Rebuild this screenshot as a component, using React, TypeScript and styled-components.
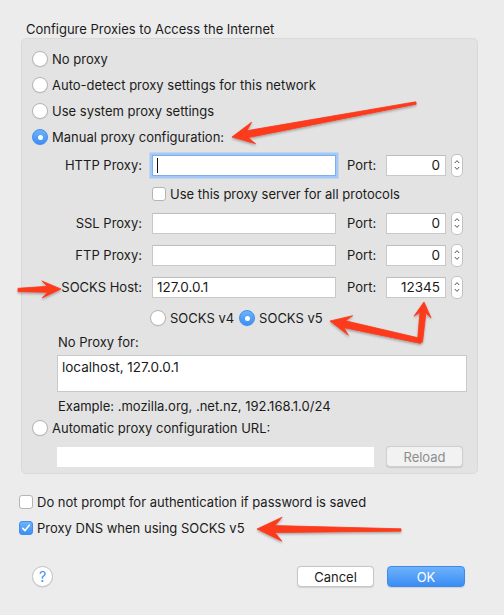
import React from 'react';
import styled, { createGlobalStyle, css } from 'styled-components';

const GlobalStyle = createGlobalStyle`
    * {
        box-sizing: border-box;
    }
    html, body {
        margin: 0;
        padding: 0;
        background: #ececec;
    }
    body {
        font-family: Inter, Roboto, "Liberation Sans", Arial, sans-serif;
        font-size: 13px;
        color: #1b1b1b;
    }
`;

type Pt = [number, number];

// skitch-like arrow: tapered shaft, swept-back barbs
const arrowPoints = (tail: Pt, tip: Pt, tailW: number, shaftW: number, headLen: number, headW: number) => {
    const dx = tip[0] - tail[0];
    const dy = tip[1] - tail[1];
    const len = Math.hypot(dx, dy);
    const ux = dx / len;
    const uy = dy / len;
    const nx = -uy;
    const ny = ux;
    const at = (d: number, w: number): Pt => [tip[0] - ux * d + nx * w, tip[1] - uy * d + ny * w];
    const pts: Pt[] = [
        [tail[0] + nx * tailW / 2, tail[1] + ny * tailW / 2],
        at(headLen * 0.72, shaftW / 2),
        at(headLen, headW / 2),
        tip,
        at(headLen, -headW / 2),
        at(headLen * 0.72, -shaftW / 2),
        [tail[0] - nx * tailW / 2, tail[1] - ny * tailW / 2],
    ];
    return pts.map((p) => `${p[0].toFixed(1)},${p[1].toFixed(1)}`).join(' ');
};

const arrows = [
    arrowPoints([416, 103], [232, 137], 2.5, 7, 22, 22),
    arrowPoints([18, 290], [61, 289], 3.5, 6, 19, 17),
    arrowPoints([421, 341], [330, 321], 5, 7, 21, 20),
    arrowPoints([420, 342], [424, 302], 5, 6, 15, 17),
    arrowPoints([401, 530], [257, 529], 2.5, 7, 25, 24),
];

const Annotations = () => (
    <Overlay viewBox="0 0 504 615" width={504} height={615}>
        <defs>
            <filter id="shadow" x="-10%" y="-20%" width="120%" height="140%">
                <feDropShadow dx="0" dy="1.5" stdDeviation="1.2" floodColor="#000" floodOpacity="0.3" />
            </filter>
        </defs>
        <g filter="url(#shadow)" fill="#fb3a1c">
            {arrows.map((p, i) => (
                <polygon key={i} points={p} strokeLinejoin="round" stroke="#fb3a1c" strokeWidth={0.8} />
            ))}
        </g>
    </Overlay>
);

const Radio = ({ checked, label }: { checked?: boolean; label: string }) => (
    <RadioRow>
        <RadioDot checked={checked} />
        <span>{label}</span>
    </RadioRow>
);

const Check = ({ checked, label }: { checked?: boolean; label: string }) => (
    <CheckRow>
        <CheckBox checked={checked}>
            {checked && (
                <svg width="10" height="10" viewBox="0 0 10 10">
                    <path d="M1.8 5.4 L4 7.6 L8.3 2.2" fill="none" stroke="#fff" strokeWidth="1.6" strokeLinecap="round" strokeLinejoin="round" />
                </svg>
            )}
        </CheckBox>
        <span>{label}</span>
    </CheckRow>
);

const Stepper = () => (
    <StepperBox>
        <svg width="8" height="18" viewBox="0 0 8 18">
            <path d="M1.8 7 L4 4.6 L6.2 7" fill="none" stroke="#555" strokeWidth="1" />
            <path d="M1.8 11 L4 13.4 L6.2 11" fill="none" stroke="#555" strokeWidth="1" />
        </svg>
    </StepperBox>
);

const ProxyRow = ({ label, host, port, focused }: { label: string; host?: string; port: string; focused?: boolean }) => (
    <>
        <FieldLabel>{label}</FieldLabel>
        <Field focused={focused}>
            {focused && <Caret />}
            {host}
        </Field>
        <PortLabel>Port:</PortLabel>
        <Field align="right">{port}</Field>
        <Stepper />
    </>
);

export default function App() {
    return (
        <Window>
            <GlobalStyle />
            <Title>Configure Proxies to Access the Internet</Title>
            <Group>
                <RadioList>
                    <Radio label="No proxy" />
                    <Radio label="Auto-detect proxy settings for this network" />
                    <Radio label="Use system proxy settings" />
                    <Radio checked label="Manual proxy configuration:" />
                </RadioList>

                <ManualGrid>
                    <ProxyRow label="HTTP Proxy:" port="0" focused />
                    <GridCheck>
                        <Check label="Use this proxy server for all protocols" />
                    </GridCheck>
                    <ProxyRow label="SSL Proxy:" port="0" />
                    <ProxyRow label="FTP Proxy:" port="0" />
                    <ProxyRow label="SOCKS Host:" host="127.0.0.1" port="12345" />
                </ManualGrid>

                <SocksVersions>
                    <Radio label="SOCKS v4" />
                    <Radio checked label="SOCKS v5" />
                </SocksVersions>

                <NoProxy>
                    <span>No Proxy for:</span>
                    <TextArea>localhost, 127.0.0.1</TextArea>
                    <span>Example: .mozilla.org, .net.nz, 192.168.1.0/24</span>
                </NoProxy>

                <AutoSection>
                    <Radio label="Automatic proxy configuration URL:" />
                    <UrlRow>
                        <UrlField />
                        <Button disabled>Reload</Button>
                    </UrlRow>
                </AutoSection>
            </Group>

            <Options>
                <Check label="Do not prompt for authentication if password is saved" />
                <Check checked label="Proxy DNS when using SOCKS v5" />
            </Options>

            <Footer>
                <HelpButton>?</HelpButton>
                <Buttons>
                    <Button>Cancel</Button>
                    <Button primary>OK</Button>
                </Buttons>
            </Footer>

            <Annotations />
        </Window>
    );
}

const Window = styled.div`
    position: relative;
    width: 504px;
    height: 615px;
    overflow: hidden;
    padding-top: 21px;
    display: flex;
    flex-direction: column;
    background: #ececec;
`;

const Overlay = styled.svg`
    position: absolute;
    left: 0;
    top: 0;
    pointer-events: none;
`;

const Title = styled.div`
    margin-left: 26px;
    line-height: 16px;
    height: 16px;
`;

const Group = styled.div`
    margin: 1px 0 0 21px;
    width: 457px;
    height: 436px;
    background: #e3e3e3;
    border: 1px solid #d9d9d9;
    border-radius: 5px;
    display: flex;
    flex-direction: column;
`;

const RadioList = styled.div`
    display: flex;
    flex-direction: column;
    gap: 6px;
    padding: 10px 0 0 10px;
`;

const RadioRow = styled.label`
    display: flex;
    align-items: center;
    gap: 4px;
    height: 20px;
    white-space: nowrap;
`;

const RadioDot = styled.span<{ checked?: boolean }>`
    width: 16px;
    height: 16px;
    border-radius: 50%;
    flex: none;
    position: relative;
    background: #ffffff;
    border: 1px solid #b5b5b5;
    box-shadow: 0 0.5px 1px rgba(0, 0, 0, 0.08);
    ${(p) =>
        p.checked &&
        css`
            background: linear-gradient(#6cb3fa, #3d8ff5);
            border-color: #3f8ef0;
            &::after {
                content: '';
                position: absolute;
                left: 50%;
                top: 50%;
                width: 5px;
                height: 5px;
                margin: -2.5px 0 0 -2.5px;
                border-radius: 50%;
                background: #ffffff;
            }
        `}
`;

const ManualGrid = styled.div`
    display: grid;
    grid-template-columns: 130px 184px 50px 60px 17px;
    grid-template-rows: 22px 16px 22px 22px 22px;
    row-gap: 10px;
    align-items: center;
    margin-top: 7px;
`;

const FieldLabel = styled.div`
    text-align: right;
    padding-right: 10px;
    white-space: nowrap;
`;

const PortLabel = styled.div`
    padding-left: 11px;
`;

const Field = styled.div<{ focused?: boolean; align?: 'left' | 'right' }>`
    position: relative;
    height: 21px;
    background: #ffffff;
    border: 1px solid #c9c9c9;
    border-top-color: #bdbdbd;
    padding: 0 5px 0 4px;
    display: flex;
    align-items: center;
    justify-content: ${(p) => (p.align === 'right' ? 'flex-end' : 'flex-start')};
    font-size: 13.5px;
    white-space: nowrap;
    ${(p) =>
        p.focused &&
        css`
            border-color: #7eaef0;
            box-shadow: 0 0 0 2.5px #a5c9f5;
        `}
`;

const Caret = styled.span`
    width: 1px;
    height: 15px;
    background: #111111;
`;

const StepperBox = styled.div`
    margin-left: 5px;
    width: 12px;
    height: 23px;
    background: #ffffff;
    border: 1px solid #c2c2c2;
    border-radius: 5px;
    display: flex;
    align-items: center;
    justify-content: center;
`;

const GridCheck = styled.div`
    grid-column: 2 / 6;
`;

const CheckRow = styled.label`
    display: flex;
    align-items: center;
    gap: 4px;
    height: 16px;
    white-space: nowrap;
`;

const CheckBox = styled.span<{ checked?: boolean }>`
    width: 14px;
    height: 14px;
    flex: none;
    border-radius: 3px;
    display: flex;
    align-items: center;
    justify-content: center;
    background: #ffffff;
    border: 1px solid #b5b5b5;
    ${(p) =>
        p.checked &&
        css`
            background: linear-gradient(#6cb3fa, #3d8ff5);
            border-color: #3f8ef0;
        `}
`;

const SocksVersions = styled.div`
    display: flex;
    gap: 5px;
    margin: 10px 0 0 128px;
`;

const NoProxy = styled.div`
    display: flex;
    flex-direction: column;
    margin: 6px 0 0 35px;
    width: 410px;

    & > span {
        line-height: 16px;
        padding-left: 1px;
    }
    & > span:first-child {
        margin-bottom: 5px;
    }
    & > span:last-child {
        margin-top: 6px;
    }
`;

const TextArea = styled.div`
    height: 37px;
    background: #ffffff;
    border: 1px solid #c9c9c9;
    padding: 3px 4px;
    font-size: 13.5px;
`;

const AutoSection = styled.div`
    display: flex;
    flex-direction: column;
    margin: 4px 0 0 10px;
`;

const UrlRow = styled.div`
    display: flex;
    align-items: center;
    margin: 8px 0 0 25px;
    gap: 12px;
`;

const UrlField = styled.div`
    width: 317px;
    height: 20px;
    background: #ffffff;
`;

const Button = styled.button<{ primary?: boolean }>`
    height: 21px;
    width: 77px;
    padding: 0;
    font-family: inherit;
    font-size: 13px;
    border-radius: 4px;
    border: 1px solid #c6c6c6;
    background: #ffffff;
    color: #1b1b1b;
    box-shadow: 0 0.5px 1px rgba(0, 0, 0, 0.12);
    &:disabled {
        background: #f2f2f2;
        color: #8d8d8d;
        border-color: #d0d0d0;
    }
    ${(p) =>
        p.primary &&
        css`
            width: 78px;
            background: linear-gradient(#6db2fb, #3b8df5);
            border-color: #3f8bea;
            color: #ffffff;
        `}
`;

const Options = styled.div`
    display: flex;
    flex-direction: column;
    gap: 10px;
    margin: 20px 0 0 19px;
`;

const Footer = styled.div`
    display: flex;
    align-items: center;
    justify-content: space-between;
    margin: 30px 39px 0 32px;
`;

const HelpButton = styled.button`
    width: 21px;
    height: 21px;
    padding: 0;
    border-radius: 50%;
    border: 1px solid #c4c4c4;
    background: #ffffff;
    color: #3a8ef6;
    font-family: inherit;
    font-size: 14px;
    box-shadow: 0 0.5px 1px rgba(0, 0, 0, 0.12);
`;

const Buttons = styled.div`
    display: flex;
    gap: 13px;
`;
